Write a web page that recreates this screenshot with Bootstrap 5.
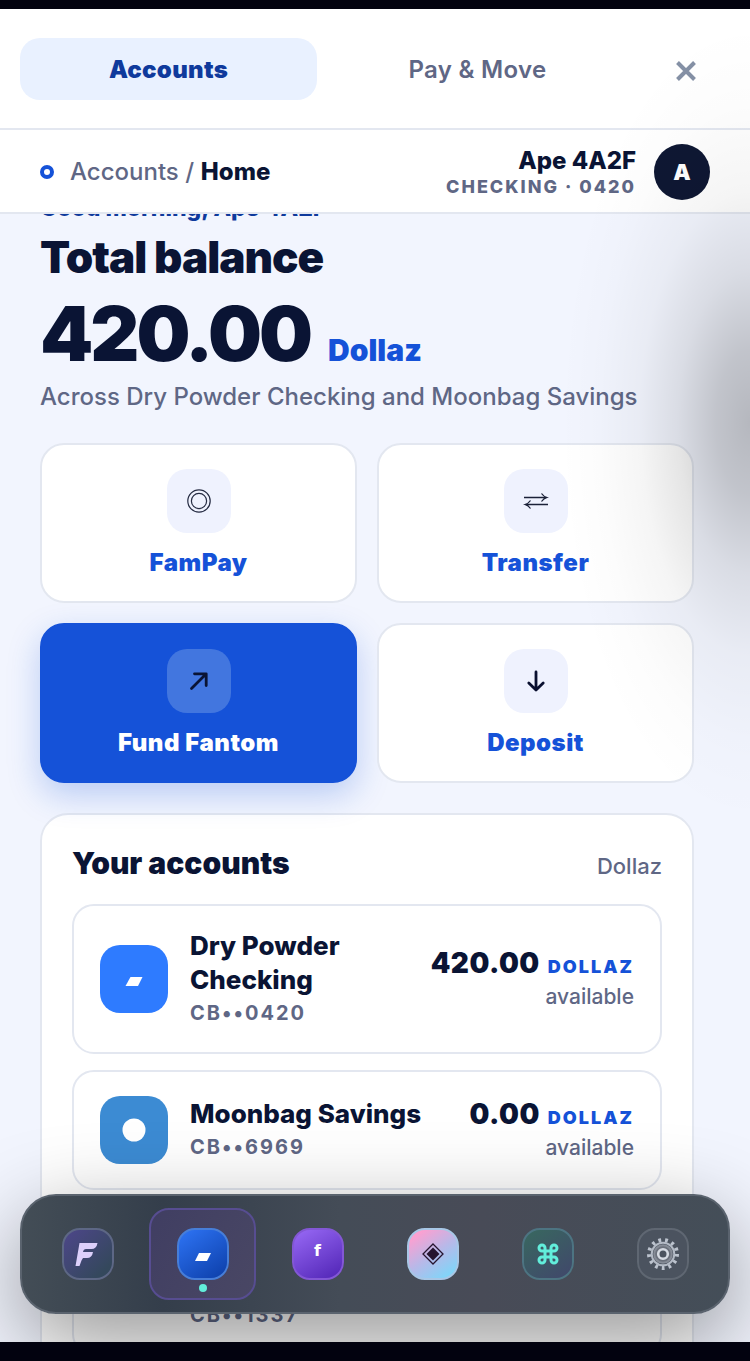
<!DOCTYPE html>
<html lang="en">
<head>
<meta charset="utf-8">
<meta name="viewport" content="width=device-width, initial-scale=1">
<title>Accounts / Home</title>
<link href="https://cdn.jsdelivr.net/npm/bootstrap@5.3.0/dist/css/bootstrap.min.css" rel="stylesheet">
<style>
  :root { --ink: #0a1434; --muted: #5f6785; --blue: #1552d8; --line: #e3e7f0; }
  body { background: #02020f; color: var(--ink); font-family: Inter, "Liberation Sans", sans-serif; font-size: 24px; }
  .app-shell { padding: 9px 0 19px; }
  .stage { background: #f2f5fe; }
  .topbar { padding: 29px 20px 28px; border-bottom: 2px solid var(--line); }
  .tab-set { gap: 12px; }
  .tab-btn { border: 0; border-radius: 20px; background: transparent; height: 62px; padding-top: 3px; font-weight: 600; letter-spacing: .3px; color: var(--muted); }
  .tab-btn.active { background: #e9f1ff; color: #0f3a9c; font-weight: 900; }
  .close-btn { width: 88px; margin-left: 16px; border: 0; background: transparent; }
  .crumbs { height: 84px; padding: 2px 40px 0; border-bottom: 2px solid var(--line); }
  .ring { width: 14px; height: 14px; border: 4px solid var(--blue); border-radius: 50%; margin-right: 16px; }
  .crumbs a { color: var(--muted); font-weight: 500; }
  .crumbs b { font-weight: 800; }
  .who { line-height: 26px; margin-right: 18px; padding-top: 3px; font-weight: 800; }
  .who-sub { font-size: 18px; letter-spacing: 2px; color: var(--muted); }
  .avatar-dot { width: 56px; height: 56px; background: #0e1733; color: #fff; font-weight: 900; font-size: 22px; }
  .feed { padding: 0 56px 0 40px; }
  .greet { margin-top: -21px; font-size: 23px; line-height: 30px; font-weight: 800; color: #0f3a9c; }
  .headline { margin: 8px 0 11px; font-size: 44px; line-height: 52px; font-weight: 900; letter-spacing: -1px; }
  .amount { font-size: 76px; line-height: 78px; font-weight: 900; letter-spacing: -3px; }
  .amount span { font-size: 30px; line-height: 30px; letter-spacing: 0; color: var(--blue); margin-left: 18px; }
  .caption-line { margin: 9px 0 30px; line-height: 32px; font-weight: 500; color: var(--muted); }
  .quick { gap: 20px; }
  .quick > * { flex: 1 1 40%; }
  .tile { background: #fff; border: 2px solid var(--line); border-radius: 24px; padding: 24px 12px 23px; color: var(--blue); font-weight: 900; line-height: 30px; letter-spacing: .5px; }
  .tile-icon { width: 64px; height: 64px; border-radius: 20px; background: #eff2fe; margin-bottom: 15px; }
  .tile.hot { background: var(--blue); border-color: var(--blue); color: #fff; box-shadow: 0 12px 32px rgba(21,82,216,.25); }
  .tile.hot .tile-icon { background: #4276df; }
  .panel { margin-top: 30px; background: #fff; border: 2px solid var(--line); border-radius: 28px; padding: 30px; }
  .panel-head { margin-bottom: 20px; }
  .panel h2 { font-size: 30px; line-height: 36px; font-weight: 900; }
  .unit { font-size: 22px; line-height: 36px; color: var(--muted); font-weight: 500; }
  .acct { border: 2px solid var(--line); border-radius: 22px; padding: 23px 26px; margin-bottom: 16px; min-height: 120px; }
  .acct-icon { width: 68px; height: 68px; border-radius: 20px; background: #2e7bff; margin-right: 22px; }
  .acct-icon.sea { background: #3c8bd3; }
  .acct-name { font-size: 26px; line-height: 34px; font-weight: 800; }
  .acct-no { font-size: 20px; line-height: 32px; letter-spacing: 2px; font-weight: 700; color: var(--muted); }
  .acct-sum { font-size: 28px; line-height: 36px; font-weight: 900; letter-spacing: .5px; }
  .acct-sum span { font-size: 18px; line-height: 18px; letter-spacing: 2px; color: var(--blue); margin-left: 2px; }
  .avail { font-size: 21px; line-height: 32px; color: var(--muted); font-weight: 500; }
  .acct.tall { min-height: 150px; }
  .acct.tall .acct-no { margin-left: 90px; }
  .edge-shade { inset: 0; pointer-events: none; background: radial-gradient(190px 400px at 100% 31%, rgba(0,0,0,.25), rgba(0,0,0,.2) 18%, rgba(0,0,0,.1) 38%, rgba(0,0,0,.04) 58%, rgba(0,0,0,.01) 80%, transparent); }
  .dock { left: 20px; right: 20px; bottom: 28px; padding: 12px; gap: 8px; border: 2px solid #5a636e; border-radius: 36px; background: linear-gradient(90deg, #434d56, #343e4b 20%, #444c57 45%, #484b57 65%, #444e58); box-shadow: 0 28px 90px rgba(0,0,0,.42); }
  .dock-btn { flex: 1 1 0; height: 92px; border: 2px solid transparent; border-radius: 20px; background: transparent; padding: 0; }
  .dock-btn.active { background: linear-gradient(120deg, #403e62, #494764); border-color: #574d91; }
  .dock-icon { width: 52px; height: 52px; border: 2px solid #606b78; border-radius: 18px; }
  .k-f { background: linear-gradient(135deg, #4d468a, #34485c 85%); border-color: #5d6785; }
  .k-bank { background: linear-gradient(145deg, #2e74f5, #0c3ea8); border-color: #477ed8; }
  .k-pay { background: linear-gradient(150deg, #9869f5, #5024b5); border-color: #8357d5; color: #fff; font: 700 16px "DejaVu Sans", sans-serif; padding-bottom: 8px; }
  .k-gem { background: linear-gradient(145deg, #ff9fd0 10%, #b9b8e8 50%, #72dcfc); border-color: #a8c7e6; }
  .k-cmd { background: linear-gradient(145deg, #38685f, #41476b); border-color: #4d7482; }
  .k-set { background: #4b535f; border-color: #5f6772; }
  .live-dot { width: 8px; height: 8px; background: #62eedb; bottom: 6px; left: calc(50% - 4px); }
</style>
</head>
<body>
<div class="app-shell vh-100">
  <div class="stage h-100 position-relative overflow-hidden d-flex flex-column">
    <header class="bg-white flex-shrink-0">
      <div class="topbar d-flex">
        <nav class="tab-set d-flex flex-grow-1" aria-label="Sections">
          <button class="tab-btn active w-50">Accounts</button>
          <button class="tab-btn w-50">Pay &amp; Move</button>
        </nav>
        <button class="close-btn" aria-label="Close"><svg class="d-block mx-auto mt-1" width="22" height="22" viewBox="0 0 22 22" stroke="#8490a5" stroke-width="4"><path d="M2.500 2.500l17 17M19.500 2.500L2.500 19.500"/></svg></button>
      </div>
      <div class="crumbs d-flex align-items-center">
        <i class="ring"></i>
        <div class="flex-grow-1"><a href="#" class="text-decoration-none">Accounts /</a> <b>Home</b></div>
        <div class="who text-end"><div>Ape 4A2F</div><div class="who-sub">CHECKING · 0420</div></div>
        <div class="avatar-dot rounded-circle d-flex align-items-center justify-content-center">A</div>
      </div>
    </header>

    <main class="overflow-hidden flex-grow-1">
      <div class="feed">
        <div class="greet">Good morning, Ape 4A2F</div>
        <h1 class="headline">Total balance</h1>
        <div class="amount">420.00<span>Dollaz</span></div>
        <p class="caption-line">Across Dry Powder Checking and Moonbag Savings</p>

        <div class="quick d-flex flex-wrap">
          <button class="tile d-flex flex-column align-items-center">
            <span class="tile-icon d-flex align-items-center justify-content-center"><svg width="26" height="26" viewBox="0 0 26 26" fill="none" stroke="#252b42" stroke-width="1.2"><circle cx="13" cy="13" r="11.2"/><circle cx="13" cy="13" r="7.6"/></svg></span>FamPay
          </button>
          <button class="tile d-flex flex-column align-items-center">
            <span class="tile-icon d-flex align-items-center justify-content-center"><svg width="26" height="20" viewBox="0 0 26 20" fill="none" stroke="#1b2138" stroke-width="1.3"><path d="M1 6.500H24M18.500 2.500Q20.500 5.500 24 6.500Q20.500 7.500 18.500 10.500M25 13.500H2M7.500 9.500Q5.500 12.500 2 13.500Q5.500 14.500 7.500 17.500"/></svg></span>Transfer
          </button>
          <button class="tile hot d-flex flex-column align-items-center">
            <span class="tile-icon d-flex align-items-center justify-content-center"><svg width="24" height="24" viewBox="0 0 24 24" fill="none" stroke="#0a1434" stroke-width="2.800" stroke-linecap="round" stroke-linejoin="round"><path d="M4.500 19.500L19 5M7.500 4.800H19.200V16.500"/></svg></span>Fund Fantom
          </button>
          <button class="tile d-flex flex-column align-items-center">
            <span class="tile-icon d-flex align-items-center justify-content-center"><svg width="24" height="24" viewBox="0 0 24 24" fill="none" stroke="#0a1030" stroke-width="2.800" stroke-linecap="round" stroke-linejoin="round"><path d="M12 3V21M4.800 14L12 21L19.200 14"/></svg></span>Deposit
          </button>
        </div>

        <section class="panel">
          <div class="panel-head d-flex justify-content-between align-items-baseline">
            <h2 class="m-0">Your accounts</h2><span class="unit">Dollaz</span>
          </div>
          <div class="acct d-flex align-items-center">
            <div class="acct-icon flex-shrink-0 d-flex align-items-center justify-content-center"><svg width="18" height="18" viewBox="0 0 18 18"><path d="M5.500 7H17.500L13 16H.500Z" fill="#fff"/></svg></div>
            <div class="flex-grow-1"><div class="acct-name">Dry Powder Checking</div><div class="acct-no">CB••0420</div></div>
            <div class="text-end text-nowrap"><div class="acct-sum">420.00 <span>DOLLAZ</span></div><div class="avail">available</div></div>
          </div>
          <div class="acct d-flex align-items-center">
            <div class="acct-icon sea flex-shrink-0 d-flex align-items-center justify-content-center"><svg width="24" height="24" viewBox="0 0 24 24"><circle cx="12" cy="12" r="11.500" fill="#fff"/></svg></div>
            <div class="flex-grow-1"><div class="acct-name">Moonbag Savings</div><div class="acct-no">CB••6969</div></div>
            <div class="text-end text-nowrap"><div class="acct-sum">0.00 <span>DOLLAZ</span></div><div class="avail">available</div></div>
          </div>
          <div class="acct tall d-flex align-items-end">
            <div class="acct-no">CB••1337</div>
          </div>
        </section>
      </div>
    </main>

    <div class="edge-shade position-absolute"></div>

    <nav class="dock position-absolute d-flex" aria-label="Apps">
      <button class="dock-btn d-flex align-items-center justify-content-center" aria-label="Fantom">
        <span class="dock-icon k-f d-flex align-items-center justify-content-center"><svg width="26" height="26" viewBox="0 0 26 26" fill="#ddd0fb"><path d="M4.500 2H22.500Q21.500 8 16.500 8H11Q8.500 8 8 11H18Q17 17 12 17H8L6.500 19.500L4.500 25H.500Z"/></svg></span>
      </button>
      <button class="dock-btn active position-relative d-flex align-items-center justify-content-center" aria-label="Bank">
        <span class="dock-icon k-bank d-flex align-items-center justify-content-center"><svg width="18" height="18" viewBox="0 0 18 18"><path d="M5 8H17L13 16H1Z" fill="#fff"/></svg></span>
        <i class="live-dot rounded-circle position-absolute"></i>
      </button>
      <button class="dock-btn d-flex align-items-center justify-content-center">
        <span class="dock-icon k-pay d-flex align-items-center justify-content-center">f</span>
      </button>
      <button class="dock-btn d-flex align-items-center justify-content-center" aria-label="Collectibles">
        <span class="dock-icon k-gem d-flex align-items-center justify-content-center"><svg width="24" height="24" viewBox="0 0 24 24"><path d="M12 2L22 12L12 22L2 12Z" fill="none" stroke="#26142f" stroke-width="1.300"/><path d="M12 5.500L18.500 12L12 18.500L5.500 12Z" fill="#26142f"/></svg></span>
      </button>
      <button class="dock-btn d-flex align-items-center justify-content-center" aria-label="Commands">
        <span class="dock-icon k-cmd d-flex align-items-center justify-content-center"><svg width="22" height="22" viewBox="0 0 22 22" fill="none" stroke="#62eedb" stroke-width="3"><path d="M8 8V5A3 3 0 1 0 5 8H17A3 3 0 1 0 14 5V17A3 3 0 1 0 17 14H5A3 3 0 1 0 8 17Z"/></svg></span>
      </button>
      <button class="dock-btn d-flex align-items-center justify-content-center" aria-label="Settings">
        <span class="dock-icon k-set d-flex align-items-center justify-content-center"><svg width="34" height="34" viewBox="0 0 34 34" fill="none"><circle cx="17" cy="17" r="14" stroke="#bcc3ce" stroke-width="4" stroke-dasharray="2.766 4"/><circle cx="17" cy="17" r="11.300" stroke="#b3bac5" stroke-width="2"/><circle cx="17" cy="17" r="8.800" fill="#6b717c" stroke="#858b96" stroke-width="2"/><circle cx="17" cy="17" r="4.800" fill="#4b535f" stroke="#d5dae2" stroke-width="2.600"/></svg></span>
      </button>
    </nav>
  </div>
</div>
<script src="https://cdn.jsdelivr.net/npm/bootstrap@5.3.0/dist/js/bootstrap.bundle.min.js"></script>
</body>
</html>
